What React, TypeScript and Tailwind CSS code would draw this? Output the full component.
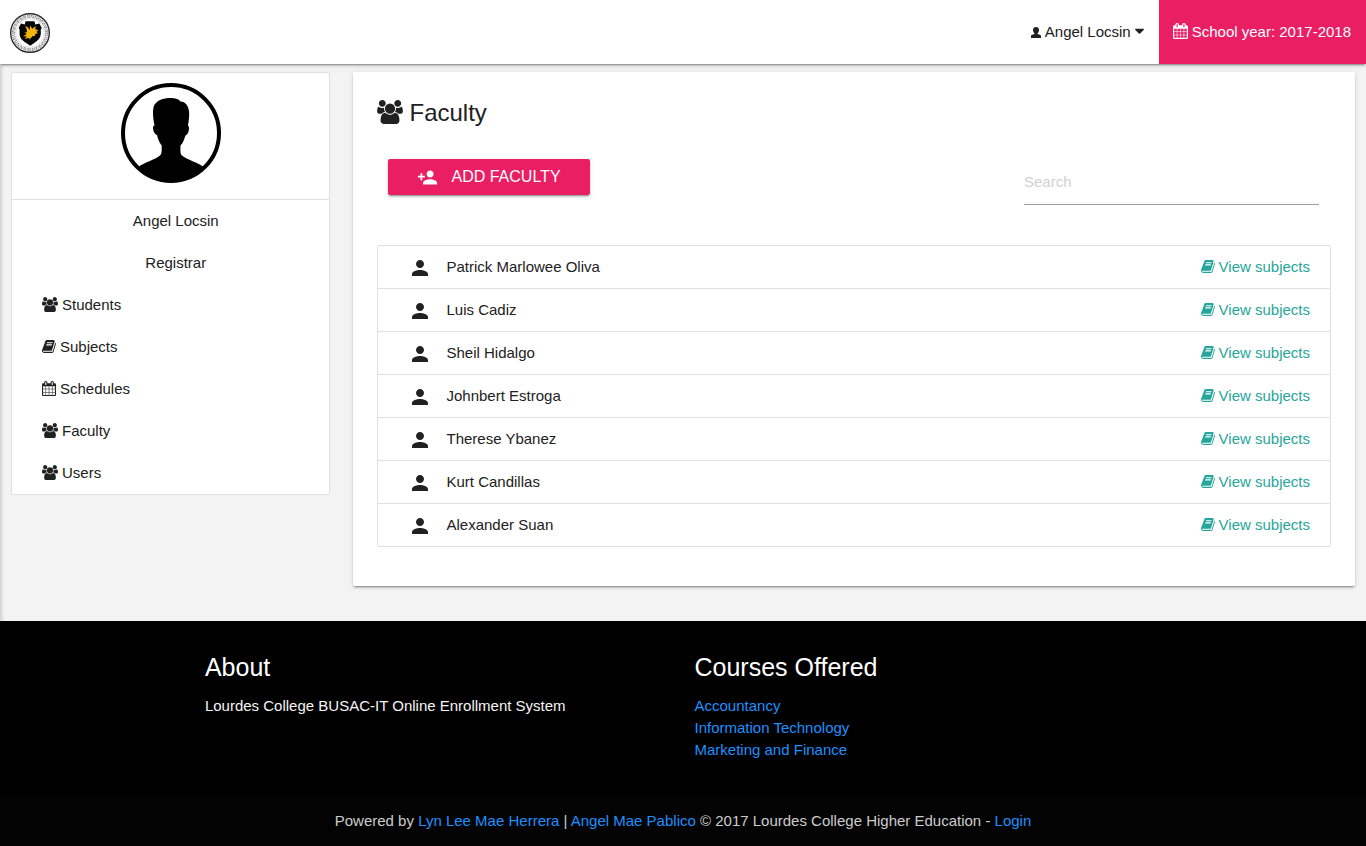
import React from "react";
import { MdPerson, MdPersonAdd } from "react-icons/md";

type GlyphProps = { className?: string };

const Users = ({ className = "" }: GlyphProps) => (
  <svg viewBox="-64 0 1920 1792" fill="currentColor" aria-hidden="true" className={className}>
    <path d="M529 896q-162 5-265 128h-134q-82 0-138-40.5t-56-118.5q0-353 124-353 6 0 43.5 21t97.5 42.5 119 21.5q67 0 133-23-5 37-5 66 0 139 81 256zm1071 637q0 120-73 189.5t-194 69.5h-874q-121 0-194-69.5t-73-189.5q0-53 3.5-103.5t14-109 26.5-108.5 43-97.5 62-81 85.5-53.5 111.5-20q10 0 43 21.5t73 48 107 48 135 21.5 135-21.5 107-48 73-48 43-21.5q61 0 111.5 20t85.5 53.5 62 81 43 97.5 26.5 108.5 14 109 3.5 103.5zm-1024-1277q0 106-75 181t-181 75-181-75-75-181 75-181 181-75 181 75 75 181zm704 384q0 159-112.5 271.5t-271.5 112.5-271.5-112.5-112.5-271.5 112.5-271.5 271.5-112.5 271.5 112.5 112.5 271.5zm576 225q0 78-56 118.5t-138 40.5h-134q-103-123-265-128 81-117 81-256 0-29-5-66 66 23 133 23 59 0 119-21.5t97.5-42.5 43.5-21q124 0 124 353zm-128-609q0 106-75 181t-181 75-181-75-75-181 75-181 181-75 181 75 75 181z" />
  </svg>
);

const Book = ({ className = "" }: GlyphProps) => (
  <svg viewBox="64 0 1664 1792" fill="currentColor" aria-hidden="true" className={className}>
    <path d="M1703 478q40 57 18 129l-275 906q-19 64-76.5 107.5t-122.5 43.5h-923q-77 0-148.5-53.5t-99.5-131.5q-24-67-2-127 0-4 3-27t4-37q1-8-3-21.5t-3-19.5q2-11 8-21t16.5-23.5 16.5-23.5q23-38 45-91.5t30-91.5q3-10 .5-30t-.5-28q3-11 17-28t17-23q21-36 42-92t25-90q1-9-2.5-32t.5-28q4-13 22-30.5t22-22.5q19-26 42.5-84.5t27.5-96.5q1-8-3-25.5t-2-26.5q2-8 9-18t18-23 17-21q8-12 16.5-30.5t15-35 16-36 19.5-32 26.5-23.5 36-11.5 47.5 5.5l-1 3q38-9 51-9h761q74 0 114 56t18 130l-274 906q-36 119-71.5 153.5t-128.5 34.5h-869q-27 0-38 15-11 16-1 43 24 70 144 70h923q29 0 56-15.5t35-41.5l300-987q7-22 5-57 38 15 59 43zm-1064 2q-4 13 2 22.5t20 9.5h608q13 0 25.5-9.5t16.5-22.5l21-64q4-13-2-22.5t-20-9.5h-608q-13 0-25.5 9.5t-16.5 22.5zm-83 256q-4 13 2 22.5t20 9.5h608q13 0 25.5-9.5t16.5-22.5l21-64q4-13-2-22.5t-20-9.5h-608q-13 0-25.5 9.5t-16.5 22.5z" />
  </svg>
);

const Calendar = ({ className = "" }: GlyphProps) => (
  <svg viewBox="64 0 1664 1792" fill="currentColor" aria-hidden="true" className={className}>
    <path d="M192 1664h288v-288h-288v288zm352 0h320v-288h-320v288zm-352-352h288v-320h-288v320zm352 0h320v-320h-320v320zm-352-384h288v-288h-288v288zm736 736h320v-288h-320v288zm-384-736h320v-288h-320v288zm768 736h288v-288h-288v288zm-384-352h320v-320h-320v320zm-352-864v-288q0-13-9.5-22.5t-22.5-9.5h-64q-13 0-22.5 9.5t-9.5 22.5v288q0 13 9.5 22.5t22.5 9.5h64q13 0 22.5-9.5t9.5-22.5zm736 864h288v-320h-288v320zm-384-384h320v-288h-320v288zm384 0h288v-288h-288v288zm32-480v-288q0-13-9.5-22.5t-22.5-9.5h-64q-13 0-22.5 9.5t-9.5 22.5v288q0 13 9.5 22.5t22.5 9.5h64q13 0 22.5-9.5t9.5-22.5zm384-64v1280q0 52-38 90t-90 38h-1408q-52 0-90-38t-38-90v-1280q0-52 38-90t90-38h128v-96q0-66 47-113t113-47h64q66 0 113 47t47 113v96h384v-96q0-66 47-113t113-47h64q66 0 113 47t47 113v96h128q52 0 90 38t38 90z" />
  </svg>
);

const User = ({ className = "" }: GlyphProps) => (
  <svg viewBox="0 0 10 11" fill="currentColor" aria-hidden="true" className={className}>
    <path d="M5 0C6.900 0 8 1.300 8 3.100C8 4.600 7.400 5.900 6.500 6.500V7L9 7.800C9.700 8.100 10 8.600 10 9.300V11H0V9.300C0 8.600 .3 8.100 1 7.800L3.500 7V6.500C2.600 5.900 2 4.600 2 3.100C2 1.300 3.100 0 5 0Z" />
  </svg>
);

const CaretDown = ({ className = "" }: GlyphProps) => (
  <svg viewBox="384 0 1024 1792" fill="currentColor" aria-hidden="true" className={className}>
    <path d="M1408 704q0 26-19 45l-448 448q-19 19-45 19t-45-19l-448-448q-19-19-19-45t19-45 45-19h896q26 0 45 19t19 45z" />
  </svg>
);

const Seal = () => (
  <svg viewBox="0 0 40 40" role="img" aria-label="Lourdes College seal" className="size-10">
    <circle cx="20" cy="20" r="19.3" fill="#fff" stroke="#2a2a2a" strokeWidth="1.4" />
    <circle cx="20" cy="20" r="17.3" fill="none" stroke="#8a8a8a" strokeWidth="1.6" strokeDasharray="1.500 0.700 0.800 0.900" />
    <circle cx="20" cy="20" r="15.700" fill="none" stroke="#9a9a9a" strokeWidth="1.500" strokeDasharray="0.800 0.800 1.600 0.700" />
    <circle cx="20" cy="20" r="14.300" fill="#fff" stroke="#ccc" strokeWidth="0.600" />
    <path d="M15.500 8.300H24.500L25.300 11.600L29.300 10.400L31.800 15L30.800 16.500V21C30.300 26.500 26 28.500 23.500 30.500L20.200 32.800L17 30.500C14 28.500 10 26.500 9.600 21V16.500L8.600 15L11 10.400L14.800 11.600Z" fill="#050505" />
    <path d="M15 12.800L18.400 14.800L19.400 17.200L20.400 12.400L22.200 15.800L25.800 13L25.200 16.200L28.600 17.200L26.400 18.800L27.800 20.600L24.800 21L25.400 22.800L22.400 23.200L19.200 26.800L19.200 24.800L14.600 26L17 23.400L13 23.200L16.600 21.200L14.600 19.600L17 19.200L16.800 16.800Z" fill="#f3b40c" />
  </svg>
);

const Avatar = () => (
  <svg viewBox="0 0 100 100" role="img" aria-label="Angel Locsin" className="size-[100px]">
    <circle cx="50" cy="50" r="48" fill="#fff" stroke="#000" strokeWidth="4" />
    <path d="M17 84.500C23 79 34 77 39 72.500C41 71 40.700 67 40.700 62.500C38 59 37 56 36 52C33 51 32 47 32 44.500C32 43.500 32.600 42.500 33.500 42.500C32 35 31.500 29 32.500 24C35 17 42 15 50 15C55 15 58 16.500 59.500 18.500C65 18.500 68.500 24 68.200 32C68 36 67.500 39 67 42.500C68 43 68.200 45 67.800 47.500C67.300 50 66 52 64.500 52.500C63 57 62 60 59.500 62.500C59.500 67 59 71 61 72.500C66 77 77 79 83 84.500C74 94 62 99 50 99S26 94 17 84.500Z" fill="#000" />
  </svg>
);

const menu = [
  { label: "Students", icon: <Users className="mb-0.5 h-[15px] w-4" /> },
  { label: "Subjects", icon: <Book className="mb-0.5 h-[15px] w-[14px]" /> },
  { label: "Schedules", icon: <Calendar className="mb-0.5 h-[15px] w-[14px]" /> },
  { label: "Faculty", icon: <Users className="mb-0.5 h-[15px] w-4" /> },
  { label: "Users", icon: <Users className="mb-0.5 h-[15px] w-4" /> },
];

const faculty = [
  "Patrick Marlowee Oliva",
  "Luis Cadiz",
  "Sheil Hidalgo",
  "Johnbert Estroga",
  "Therese Ybanez",
  "Kurt Candillas",
  "Alexander Suan",
];

const courses = ["Accountancy", "Information Technology", "Marketing and Finance"];

const raised = "shadow-[0_2px_2px_0_rgba(0,0,0,0.14),0_1px_5px_0_rgba(0,0,0,0.12),0_3px_1px_-2px_rgba(0,0,0,0.2)]";

function Header() {
  return (
    <header className={`relative flex h-16 items-center justify-between bg-white ${raised}`}>
      <a href="#" className="ml-[10px] pt-0.5">
        <Seal />
      </a>
      <nav className="flex h-full">
        <button type="button" className="flex items-center gap-1 px-[15px]">
          <User className="h-[11px] w-[10px]" />
          Angel Locsin
          <CaretDown className="mb-0.5 h-4 w-[9px]" />
        </button>
        <a href="#" className="flex items-center gap-1 bg-[#e91e63] pr-[15px] pl-[14px] text-white">
          <Calendar className="mb-0.5 h-4 w-[15px]" />
          School year: 2017-2018
        </a>
      </nav>
    </header>
  );
}

function Sidebar() {
  return (
    <aside className="rounded-[2px] border border-[#e0e0e0] bg-white">
      <div className="flex justify-center border-b border-[#e0e0e0] pt-[10px] pb-4 pl-0.5">
        <Avatar />
      </div>
      <div className="pl-[11px] text-center leading-[42px]">
        <p>Angel Locsin</p>
        <p>Registrar</p>
      </div>
      <ul>
        {menu.map((item) => (
          <li key={item.label}>
            <a href="#" className="flex h-[42px] items-center gap-1 px-[30px]">
              {item.icon}
              {item.label}
            </a>
          </li>
        ))}
      </ul>
    </aside>
  );
}

function FacultyPanel() {
  return (
    <main className={`rounded-[2px] bg-white px-6 pt-6 pb-[39px] ${raised}`}>
      <h1 className="flex h-[34px] items-center gap-[7px] text-2xl">
        <Users className="mb-0.5 h-6 w-[26px]" />
        Faculty
      </h1>
      <div className="mt-[29px] flex items-start justify-between pr-3 pl-[11px]">
        <button
          type="button"
          className={`flex h-9 items-center gap-[14px] rounded-[2px] bg-[#e91e63] px-[29px] text-base text-white uppercase ${raised}`}
        >
          <MdPersonAdd className="size-[21px]" />
          Add Faculty
        </button>
        <input
          type="search"
          aria-label="Search"
          placeholder="Search"
          className="h-[46px] w-[295px] border-b border-[#9e9e9e] bg-transparent outline-none placeholder:text-[#d1d1d1]"
        />
      </div>
      <ul className="mt-10 divide-y divide-[#e0e0e0] rounded-[2px] border border-[#e0e0e0]">
        {faculty.map((name) => (
          <li key={name} className="flex h-[43px] items-center pr-5 pl-[30px] last:h-[42px]">
            <MdPerson className="mt-0.5 size-6" />
            <span className="ml-[15px] grow">{name}</span>
            <a href="#" className="flex items-center gap-1 text-[#26a69a]">
              <Book className="mb-0.5 h-[15px] w-[14px]" />
              View subjects
            </a>
          </li>
        ))}
      </ul>
    </main>
  );
}

function Footer() {
  return (
    <footer className="flex grow flex-col bg-black text-[#f5f5f5]">
      <div className="mx-auto grid w-[70%] grow grid-cols-2 gap-x-[23px] pt-7">
        <section>
          <h2 className="text-[25px] leading-9 text-white">About</h2>
          <p className="mt-[10px] leading-[22px]">Lourdes College BUSAC-IT Online Enrollment System</p>
        </section>
        <section>
          <h2 className="text-[25px] leading-9 text-white">Courses Offered</h2>
          <ul className="mt-[10px] leading-[22px]">
            {courses.map((course) => (
              <li key={course}>
                <a href="#" className="text-[#1e90ff]">{course}</a>
              </li>
            ))}
          </ul>
        </section>
      </div>
      <div className="mt-[35px] bg-[#030303] text-center leading-[50px] text-[#cccccc]">
        Powered by <a href="#" className="text-[#1e90ff]">Lyn Lee Mae Herrera</a> |{" "}
        <a href="#" className="text-[#1e90ff]">Angel Mae Pablico</a> © 2017 Lourdes College Higher Education -{" "}
        <a href="#" className="text-[#1e90ff]">Login</a>
      </div>
    </footer>
  );
}

export default function App() {
  return (
    <div className="flex min-h-screen flex-col bg-[#f3f3f3] font-['Liberation_Sans',Arial,sans-serif] text-[15px] text-[#212121]">
      <Header />
      <div className="grid grid-cols-[minmax(0,1fr)_minmax(0,3fr)] items-start pt-2 pb-[35px] shadow-[inset_4px_0_4px_-3px_rgba(0,0,0,0.2)]">
        <div className="pr-3 pl-[11px]">
          <Sidebar />
        </div>
        <div className="px-[11px]">
          <FacultyPanel />
        </div>
      </div>
      <Footer />
    </div>
  );
}
